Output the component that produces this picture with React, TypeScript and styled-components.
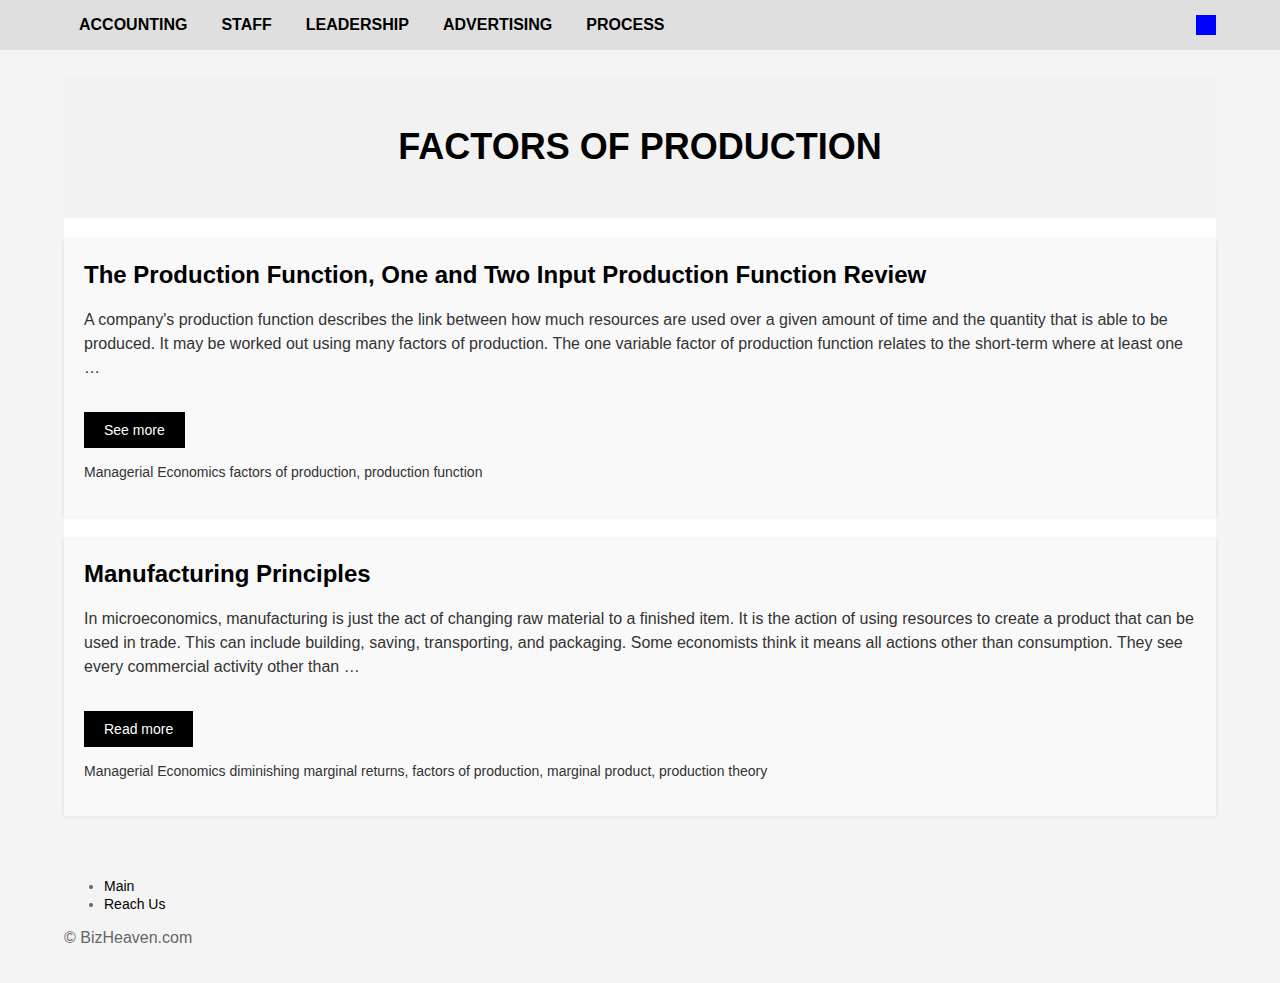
import React from "react";
import styled, { createGlobalStyle } from "styled-components";

const Global = createGlobalStyle`
  html, body { margin: 0; padding: 0; }
  body {
    background: #f4f4f4;
    font-family: "Liberation Sans", Arial, Helvetica, sans-serif;
    color: #333;
  }
`;

const NavBar = styled.nav`
  height: 50px;
  background: #dfdfdf;
`;

const NavInner = styled.div`
  width: 1152px;
  margin: 0 auto;
  height: 100%;
  display: flex;
  align-items: flex-start;
  justify-content: space-between;
`;

const NavList = styled.ul`
  list-style: none;
  margin: 0;
  padding: 0;
  display: flex;
`;

const NavLink = styled.a`
  display: block;
  padding: 16px 17px 0 15px;
  margin-right: 2px;
  font-size: 16px;
  font-weight: 700;
  line-height: 18px;
  color: #000;
  text-decoration: none;
  text-transform: uppercase;
`;

const Square = styled.div`
  width: 20px;
  height: 20px;
  background: #00f;
  margin-top: 15px;
`;

const Wrap = styled.div`
  width: 1152px;
  margin: 28px auto 0;
`;

const Header = styled.header`
  height: 140px;
  background: #f2f2f2;
  display: flex;
  align-items: center;
  justify-content: center;
`;

const Title = styled.h1`
  margin: 0 0 2px;
  font-size: 36px;
  font-weight: 700;
  color: #000;
  text-transform: uppercase;
`;

const Main = styled.main`
  background: #fff;
  padding-top: 22px;
  display: flex;
  flex-direction: column;
  gap: 22px;
`;

const Card = styled.article`
  background: #f9f9f9;
  box-shadow: 0 0 4px rgba(0, 0, 0, 0.1);
  padding: 20px 20px 35px;
`;

const CardTitle = styled.h2`
  margin: 0 0 18px;
  font-size: 24px;
  line-height: 30px;
  font-weight: 700;
  color: #000;
`;

const Text = styled.p`
  margin: 0 0 32px;
  font-size: 16px;
  line-height: 24px;
  color: #333;
`;

const Button = styled.a`
  display: inline-block;
  background: #000;
  color: #fff;
  font-size: 14px;
  line-height: 36px;
  padding: 0 20px;
  text-decoration: none;
`;

const Tags = styled.p`
  margin: 14px 0 0;
  font-size: 14px;
  line-height: 20px;
  color: #333;
`;

const Footer = styled.footer`
  width: 1152px;
  margin: 61px auto 0;
  padding-bottom: 30px;
`;

const FootList = styled.ul`
  margin: 0;
  padding-left: 40px;
  color: #666;
  font-size: 14px;
  line-height: 18px;
`;

const FootLink = styled.a`
  color: #000;
  text-decoration: none;
`;

const Copy = styled.p`
  margin: 15px 0 0;
  font-size: 16px;
  line-height: 20px;
  color: #666;
`;

const posts = [
  {
    title: "The Production Function, One and Two Input Production Function Review",
    text:
      "A company's production function describes the link between how much resources are used over a given amount of time and the quantity that is able to be produced. It may be worked out using many factors of production. The one variable factor of production function relates to the short-term where at least one …",
    button: "See more",
    tags: "Managerial Economics factors of production, production function",
  },
  {
    title: "Manufacturing Principles",
    text:
      "In microeconomics, manufacturing is just the act of changing raw material to a finished item. It is the action of using resources to create a product that can be used in trade. This can include building, saving, transporting, and packaging. Some economists think it means all actions other than consumption. They see every commercial activity other than …",
    button: "Read more",
    tags:
      "Managerial Economics diminishing marginal returns, factors of production, marginal product, production theory",
  },
];

export default function App() {
  return (
    <>
      <Global />
      <NavBar>
        <NavInner>
          <NavList>
            {["Accounting", "Staff", "Leadership", "Advertising", "Process"].map((n) => (
              <li key={n}>
                <NavLink href="#">{n}</NavLink>
              </li>
            ))}
          </NavList>
          <Square />
        </NavInner>
      </NavBar>
      <Wrap>
        <Header>
          <Title>Factors of Production</Title>
        </Header>
        <Main>
          {posts.map((p) => (
            <Card key={p.title}>
              <CardTitle>{p.title}</CardTitle>
              <Text>{p.text}</Text>
              <Button href="#">{p.button}</Button>
              <Tags>{p.tags}</Tags>
            </Card>
          ))}
        </Main>
      </Wrap>
      <Footer>
        <FootList>
          <li>
            <FootLink href="#">Main</FootLink>
          </li>
          <li>
            <FootLink href="#">Reach Us</FootLink>
          </li>
        </FootList>
        <Copy>© BizHeaven.com</Copy>
      </Footer>
    </>
  );
}
